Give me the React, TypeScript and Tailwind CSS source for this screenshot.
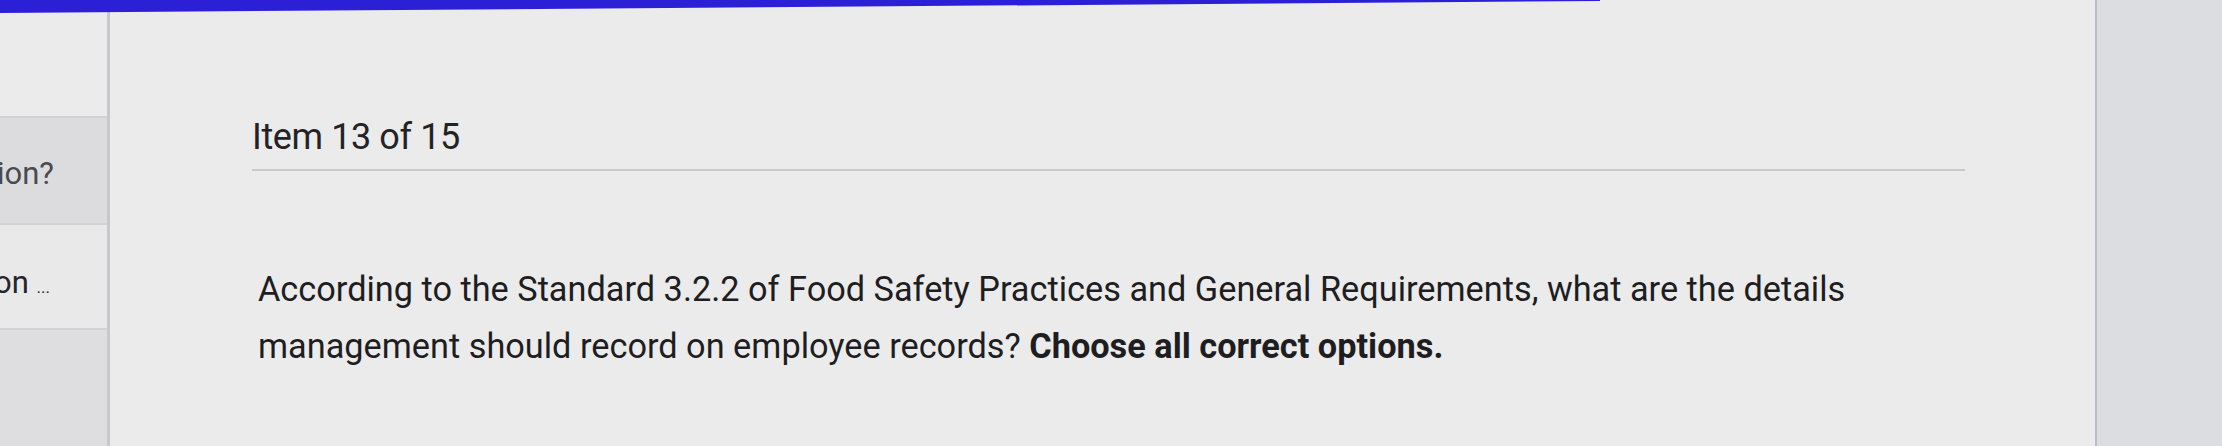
import React from "react";

export default function App() {
  return (
    <div className="relative w-[2222px] h-[446px] bg-[#ebebeb] flex overflow-hidden font-['Roboto','Liberation_Sans',sans-serif]">
      <div className="absolute left-0 top-0 w-full h-[13px] bg-[#2c20d6] [clip-path:polygon(0_0,1600px_0,1600px_1px,0_100%)]" />
      <aside className="w-[110px] shrink-0 flex flex-col border-r-[3px] border-[#c8c8cc] overflow-hidden">
        <div className="h-[118px] bg-[#ebebeb] border-b-2 border-[#d2d2d5]" />
        <div className="h-[107px] bg-[#dcdcdf] border-b-2 border-[#d2d2d5] flex items-center pt-[8px]">
          <span className="ml-[-3px] text-[31px] text-[#4a4a4f] whitespace-nowrap">ion?</span>
        </div>
        <div className="h-[105px] bg-[#e9e9e9] border-b-2 border-[#d2d2d5] flex items-center pt-[14px]">
          <span className="ml-[-6px] text-[31px] text-[#26262a] whitespace-nowrap">on <span className="text-[17px]">...</span></span>
        </div>
        <div className="flex-1 bg-[#dedee1]" />
      </aside>
      <main className="flex-1 bg-[#ebebeb] border-r-2 border-[#b8bcc4] pl-[142px] pr-[130px] pt-[117px]">
        <h1 className="text-[36px] leading-[40px] text-[#232326] tracking-[-0.4px]">Item 13 of 15</h1>
        <div className="mt-[12px] h-[2px] bg-[#c9c9cd]" />
        <p className="mt-[90px] w-[1640px] text-[34.3px] leading-[57px] text-[#1e1e22] pl-[6px]">
          According to the Standard 3.2.2 of Food Safety Practices and General Requirements, what are the details management should record on employee records? <strong className="font-bold">Choose all correct options.</strong>
        </p>
      </main>
      <div className="w-[125px] shrink-0 bg-[#dcdde0]" />
    </div>
  );
}
